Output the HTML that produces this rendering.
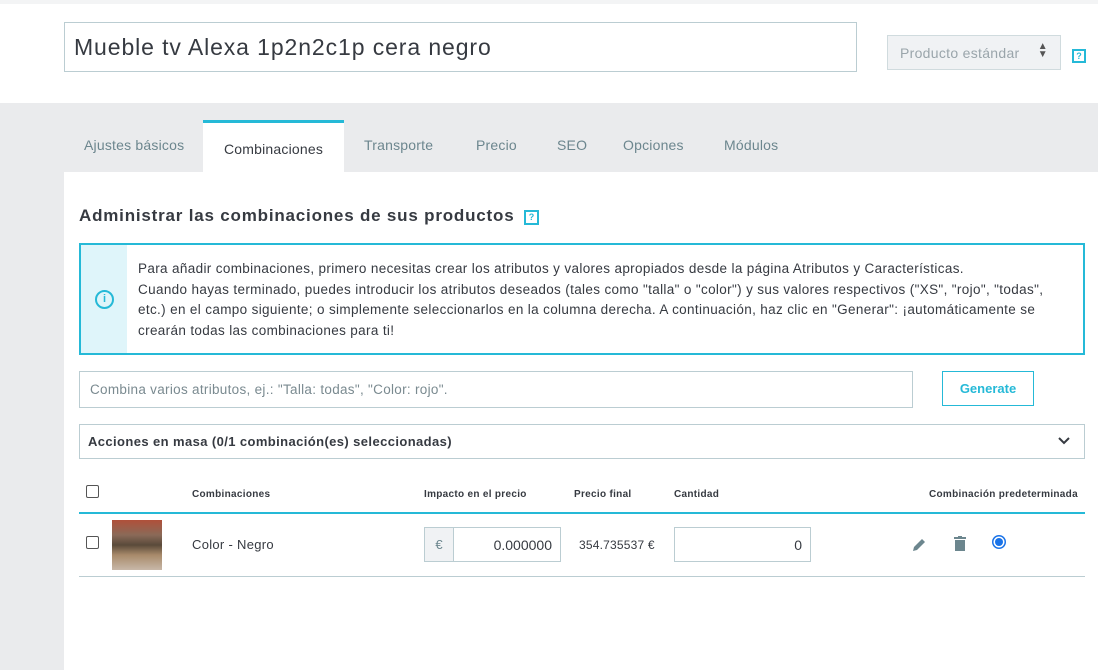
<!DOCTYPE html>
<html><head><meta charset="utf-8"><style>
*{box-sizing:border-box;margin:0;padding:0}
body{width:1098px;height:670px;overflow:hidden;background:#eaebed;font-family:"Liberation Sans",sans-serif;color:#363a41;position:relative}
.a{position:absolute}
.top{left:0;top:0;width:1098px;height:103px;background:#fff;border-top:4px solid #f3f4f5}
.main{left:64px;top:172px;width:1034px;height:498px;background:#fff}
.tab{top:120px;height:52px;font-size:14px;color:#6c868e;line-height:50px;letter-spacing:0.2px}
.th{font-size:10px;font-weight:bold;top:489px;letter-spacing:0.3px}
.cb{width:13px;height:13px;border:1px solid #555;border-radius:2px;background:#fff}
</style></head><body>
<div class="a top"></div>
<div class="a" style="left:64px;top:22px;width:793px;height:50px;border:1px solid #bbcdd2;font-size:23px;padding:11px 0 0 9px;color:#363a41;letter-spacing:0.9px">Mueble tv Alexa 1p2n2c1p cera negro</div>
<div class="a" style="left:887px;top:35px;width:174px;height:35px;border:1px solid #d0dbde;background:#f0f2f4;font-size:14px;color:#9aa5ab;padding:9px 0 0 12px;letter-spacing:0.3px">Producto estándar<span style="position:absolute;right:12px;top:7px;font-size:10px;color:#555;line-height:8px">▲<br>▼</span></div>
<div class="a" style="left:1072px;top:49px;width:14px;height:14px;border:2px solid #25b9d7;font-size:9px;color:#25b9d7;text-align:center;line-height:10px;font-weight:bold">?</div>
<div class="a main"></div>
<div class="a tab" style="left:84px">Ajustes básicos</div>
<div class="a tab" style="left:203px;width:141px;background:#fff;border-top:3px solid #25b9d7;color:#363a41;text-align:center;line-height:52px">Combinaciones</div>
<div class="a tab" style="left:364px">Transporte</div>
<div class="a tab" style="left:476px">Precio</div>
<div class="a tab" style="left:557px">SEO</div>
<div class="a tab" style="left:623px">Opciones</div>
<div class="a tab" style="left:724px">Módulos</div>
<div class="a" style="left:79px;top:206px;font-size:17px;font-weight:bold;color:#363a41;letter-spacing:0.8px">Administrar las combinaciones de sus productos</div>
<div class="a" style="left:524px;top:210px;width:15px;height:15px;border:2px solid #25b9d7;font-size:9px;color:#25b9d7;text-align:center;line-height:11px;font-weight:bold">?</div>
<div class="a" style="left:79px;top:243px;width:1006px;height:112px;border:2px solid #25b9d7;background:#fff">
<div style="position:absolute;left:0;top:0;width:46px;height:108px;background:#dff5fa"></div>
<div style="position:absolute;left:14px;top:45px;width:19px;height:19px;border:2px solid #25b9d7;border-radius:50%;color:#25b9d7;font-size:11px;text-align:center;line-height:15px;font-weight:bold">i</div>
<div style="position:absolute;left:57px;top:14px;width:930px;font-size:13.5px;letter-spacing:0.35px;line-height:20.5px;color:#363a41">Para añadir combinaciones, primero necesitas crear los atributos y valores apropiados desde la página Atributos y Características.<br>Cuando hayas terminado, puedes introducir los atributos deseados (tales como "talla" o "color") y sus valores respectivos ("XS", "rojo", "todas", etc.) en el campo siguiente; o simplemente seleccionarlos en la columna derecha. A continuación, haz clic en "Generar": ¡automáticamente se crearán todas las combinaciones para ti!</div></div>
<div class="a" style="left:79px;top:371px;width:834px;height:37px;border:1px solid #bbcdd2;font-size:13.5px;letter-spacing:0.3px;color:#7a8a90;padding:10px 0 0 10px">Combina varios atributos, ej.: "Talla: todas", "Color: rojo".</div>
<div class="a" style="left:942px;top:371px;width:92px;height:35px;border:1px solid #25b9d7;font-size:13px;color:#25b9d7;text-align:center;line-height:33px;font-weight:bold">Generate</div>
<div class="a" style="left:79px;top:424px;width:1006px;height:35px;border:1px solid #bbcdd2;font-size:13px;font-weight:bold;padding:9px 0 0 8px;letter-spacing:0.4px">Acciones en masa (0/1 combinación(es) seleccionadas)<svg style="position:absolute;right:14px;top:12px" width="12" height="8" viewBox="0 0 12 8"><path d="M1 1l5 5 5-5" stroke="#363a41" stroke-width="2" fill="none"/></svg></div>
<div class="a cb" style="left:86px;top:485px"></div>
<div class="a th" style="left:192px">Combinaciones</div>
<div class="a th" style="left:424px">Impacto en el precio</div>
<div class="a th" style="left:574px">Precio final</div>
<div class="a th" style="left:674px">Cantidad</div>
<div class="a th" style="left:929px">Combinación predeterminada</div>
<div class="a" style="left:79px;top:512px;width:1006px;height:2px;background:#25b9d7"></div>
<div class="a cb" style="left:86px;top:536px"></div>
<div class="a" style="left:112px;top:520px;width:50px;height:50px;background:linear-gradient(180deg,#b0503a 0,#8a6a58 30%,#5a4a3a 50%,#a88a6a 70%,#c8b8a8 100%)"></div>
<div class="a" style="left:192px;top:537px;font-size:13px;letter-spacing:0.3px">Color - Negro</div>
<div class="a" style="left:424px;top:527px;width:137px;height:35px;border:1px solid #bbcdd2">
<div style="position:absolute;left:0;top:0;width:29px;height:33px;background:#f0f2f4;border-right:1px solid #bbcdd2;font-size:13px;color:#6c868e;text-align:center;line-height:33px">€</div>
<div style="position:absolute;right:8px;top:9px;font-size:14px">0.000000</div></div>
<div class="a" style="left:579px;top:538px;font-size:12px;letter-spacing:0.2px">354.735537 €</div>
<div class="a" style="left:674px;top:527px;width:137px;height:35px;border:1px solid #bbcdd2;font-size:14px;text-align:right;padding:9px 8px 0 0">0</div>
<svg class="a" style="left:911px;top:537px" width="16" height="16" viewBox="0 0 16 16"><path d="M2 14l1-4 8-8 3 3-8 8z" fill="#6c868e"/></svg>
<svg class="a" style="left:954px;top:536px" width="12" height="16" viewBox="0 0 12 16"><rect x="0" y="1" width="12" height="2" fill="#6c868e"/><rect x="4" y="0" width="4" height="2" fill="#6c868e"/><rect x="1" y="4" width="10" height="11" fill="#6c868e"/></svg>
<div class="a" style="left:992px;top:535px;width:14px;height:14px;border-radius:50%;background:#1a73e8;border:1px solid #1a73e8"><div style="margin:2px;width:8px;height:8px;border-radius:50%;background:#1a73e8;box-shadow:0 0 0 1.5px #fff"></div></div>
<div class="a" style="left:79px;top:576px;width:1006px;height:1px;background:#bbcdd2"></div>
</body></html>
